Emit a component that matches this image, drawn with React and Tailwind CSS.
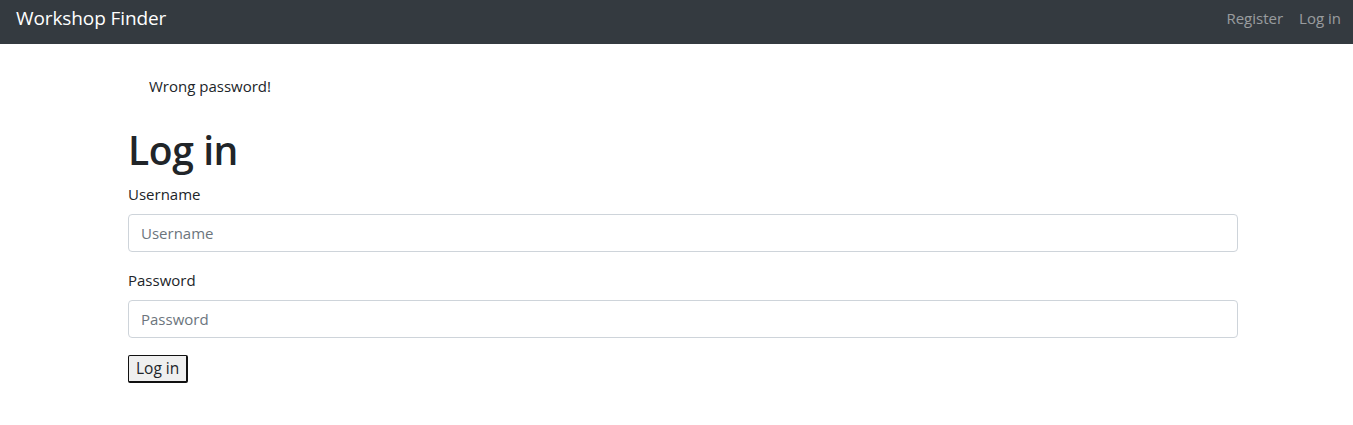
import React from 'react';

export default function App() {
  return (
    <div className="min-h-[425px] bg-white text-[#212529] font-['Open_Sans',sans-serif]">
      {/* navbar */}
      <nav className="h-[44px] bg-[#343a40] flex items-center justify-between pl-4 pr-3">
        <a className="text-white text-[19px] leading-none -mt-2 tracking-[-0.1px]">Workshop Finder</a>
        <div className="flex gap-4 -mt-2 text-[15px] text-white/50">
          <a>Register</a>
          <a>Log in</a>
        </div>
      </nav>

      <main className="ml-[128px] w-[1110px] pt-[18px]">
        <div className="px-[21px] py-3 mb-4 text-[15px] leading-6">Wrong password!</div>

        <h1 className="text-[39px] font-semibold leading-[48px] mb-2 tracking-[-0.4px]">Log in</h1>

        <form className="text-[15px]">
          <div className="mb-4">
            <label className="block leading-6 mb-2">Username</label>
            <input
              type="text"
              placeholder="Username"
              className="block w-full h-[38px] px-3 border border-[#ced4da] rounded-[4px] text-[15px] placeholder:text-[#6c757d] outline-none"
            />
          </div>
          <div className="mb-4">
            <label className="block leading-6 mb-2">Password</label>
            <input
              type="password"
              placeholder="Password"
              className="block w-full h-[38px] px-3 border border-[#ced4da] rounded-[4px] text-[15px] placeholder:text-[#6c757d] outline-none"
            />
          </div>
          <button
            type="button"
            className="mt-[1px] h-[28px] px-[7px] text-[15.5px] leading-none bg-[#efefef] border border-[#111] border-r-2 border-b-2 rounded-[2px]"
          >
            Log in
          </button>
        </form>
      </main>
    </div>
  );
}
